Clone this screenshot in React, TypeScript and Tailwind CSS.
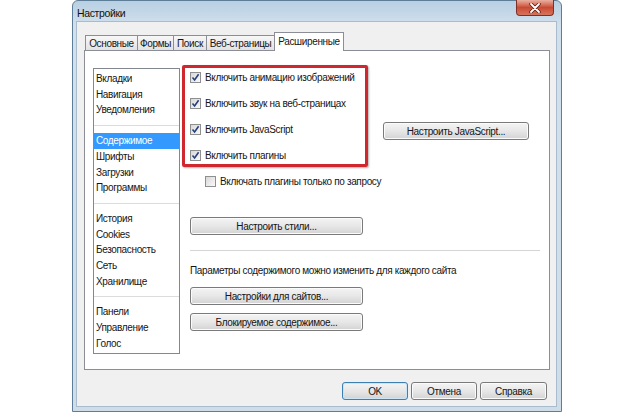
import React from 'react';

const groups: string[][] = [
  ['Вкладки', 'Навигация', 'Уведомления'],
  ['Содержимое', 'Шрифты', 'Загрузки', 'Программы'],
  ['История', 'Cookies', 'Безопасность', 'Сеть', 'Хранилище'],
  ['Панели', 'Управление', 'Голос'],
];

const tabs = [
  { label: 'Основные', w: 'w-[53px]' },
  { label: 'Формы', w: 'w-[37px]' },
  { label: 'Поиск', w: 'w-[34px]' },
  { label: 'Веб-страницы', w: 'w-[69px]' },
];

function Checkbox({ checked }: { checked?: boolean }) {
  return (
    <span className="w-[11px] h-[11px] shrink-0 border border-[#8f8f8f] bg-linear-to-br from-[#d8d8d8] to-[#fafafa] flex items-center justify-center">
      {checked && (
        <svg width="9" height="9" viewBox="0 0 9 9">
          <path d="M1.5 4.5 L3.6 7 L7.6 1.3" fill="none" stroke="#273f7a" strokeWidth="1.6" />
        </svg>
      )}
    </span>
  );
}

function Btn({ children, className = '', focused }: { children: React.ReactNode; className?: string; focused?: boolean }) {
  return (
    <div
      className={`h-[18px] flex items-center justify-center whitespace-nowrap rounded-[3px] border bg-linear-to-b from-[#f4f4f4] via-[#e7e7e7] to-[#d3d3d3] text-[#151515] ${
        focused ? 'border-[#3c7fb1] shadow-[inset_0_0_0_1px_#c8e6f7]' : 'border-[#7a7a7a] shadow-[inset_0_0_0_1px_#fbfbfb]'
      } ${className}`}
    >
      {children}
    </div>
  );
}

export default function App() {
  return (
    <div className="w-[640px] h-[415px] bg-white pl-[72px] font-['Liberation_Sans','DejaVu_Sans',sans-serif] text-[10px] tracking-[-0.35px] text-[#151515] overflow-hidden">
      <div className="w-[490px] h-[412px] flex flex-col border border-[#5d7d98] rounded-t-[6px] bg-linear-to-b from-[#b8cfe3] via-[#d2e0ec] via-[6%] to-[#cfdde9]">
        {/* title bar */}
        <div className="h-[20px] flex items-start justify-between pl-[4px] pr-[7px]">
          <span className="mt-[5px] text-[10.5px] text-[#111]">Настройки</span>
          <div className="-mt-px w-[38px] h-[16px] rounded-b-[4px] border border-t-0 border-[#7e3026] bg-linear-to-b from-[#e9b0a2] via-[#c94a33] to-[#d7745c] flex items-center justify-center">
            <svg width="12" height="10" viewBox="0 0 12 10">
              <path d="M2 1 L10 9 M10 1 L2 9" stroke="#5a1c14" strokeWidth="3.4" strokeLinecap="round" />
              <path d="M2 1 L10 9 M10 1 L2 9" stroke="#ffffff" strokeWidth="1.8" strokeLinecap="round" />
            </svg>
          </div>
        </div>

        {/* client area */}
        <div className="flex-1 flex flex-col pl-[3px] pr-[4px] pb-[4px]">
          <div className="flex-1 flex flex-col bg-[#f0f0f0] border border-[#a9bccd] pt-[10px]">
            {/* tabs */}
            <div className="h-[18px] flex items-end ml-[8px]">
              {tabs.map((t) => (
                <div
                  key={t.label}
                  className={`${t.w} h-[15px] -mr-px whitespace-nowrap border border-b-0 border-[#8b8e96] bg-linear-to-b from-[#f7f7f7] to-[#e2e2e2] flex items-center justify-center`}
                >
                  {t.label}
                </div>
              ))}
              <div className="relative z-10 w-[70px] h-[19px] -mb-px whitespace-nowrap border border-b-0 border-[#8b8e96] bg-white flex items-center justify-center pb-[2px]">
                Расширенные
              </div>
            </div>

            {/* panel */}
            <div className="ml-[7px] w-[466px] h-[320px] border border-[#8b8e96] bg-white flex items-start">
              {/* list */}
              <div className="ml-[8px] mt-[17px] w-[87px] h-[286px] border border-[#828790] pt-[2px]">
                {groups.map((g, gi) => (
                  <div key={gi}>
                    {gi > 0 && <div className="h-px bg-[#dcdcdc] my-[7px]" />}
                    {g.map((item) => (
                      <div
                        key={item}
                        className={`leading-[15.7px] px-[2px] ${item === 'Содержимое' ? 'bg-[#3399ff] text-white' : ''}`}
                      >
                        {item}
                      </div>
                    ))}
                  </div>
                ))}
              </div>

              {/* right side */}
              <div className="ml-[2px] mt-[14px] flex flex-col">
                <div className="flex items-start">
                  <div className="w-[186px] border-[3px] border-[#d0262e] rounded-[2px] shadow-[1px_1px_2px_rgba(0,0,0,0.3)] pl-[5px] flex flex-col gap-[8px]">
                    {['Включить анимацию изображений', 'Включить звук на веб-страницах', 'Включить JavaScript', 'Включить плагины'].map((l) => (
                      <div key={l} className="h-[18px] flex items-center gap-[4px]">
                        <Checkbox checked />
                        <span className="whitespace-nowrap">{l}</span>
                      </div>
                    ))}
                  </div>
                  <Btn className="ml-[15px] mt-[57px] w-[146px]">Настроить JavaScript...</Btn>
                </div>

                <div className="mt-[5px] ml-[23px] h-[18px] flex items-center gap-[4px]">
                  <Checkbox />
                  <span>Включать плагины только по запросу</span>
                </div>

                <Btn className="mt-[27px] ml-[8px] w-[173px]">Настроить стили...</Btn>

                <div className="mt-[15px] ml-[8px] w-[350px] h-px bg-[#d5d5d5]" />

                <div className="mt-[12px] ml-[8px] leading-[16px]">
                  Параметры содержимого можно изменить для каждого сайта
                </div>

                <Btn className="mt-[8px] ml-[8px] w-[173px]">Настройки для сайтов...</Btn>
                <Btn className="mt-[8px] ml-[8px] w-[173px]">Блокируемое содержимое...</Btn>
              </div>
            </div>

            {/* dialog buttons */}
            <div className="mt-[12px] mr-[9px] flex justify-end gap-[3px]">
              <Btn focused className="w-[66px]">OK</Btn>
              <Btn className="w-[66px]">Отмена</Btn>
              <Btn className="w-[67px]">Справка</Btn>
            </div>
          </div>
        </div>
      </div>
    </div>
  );
}
